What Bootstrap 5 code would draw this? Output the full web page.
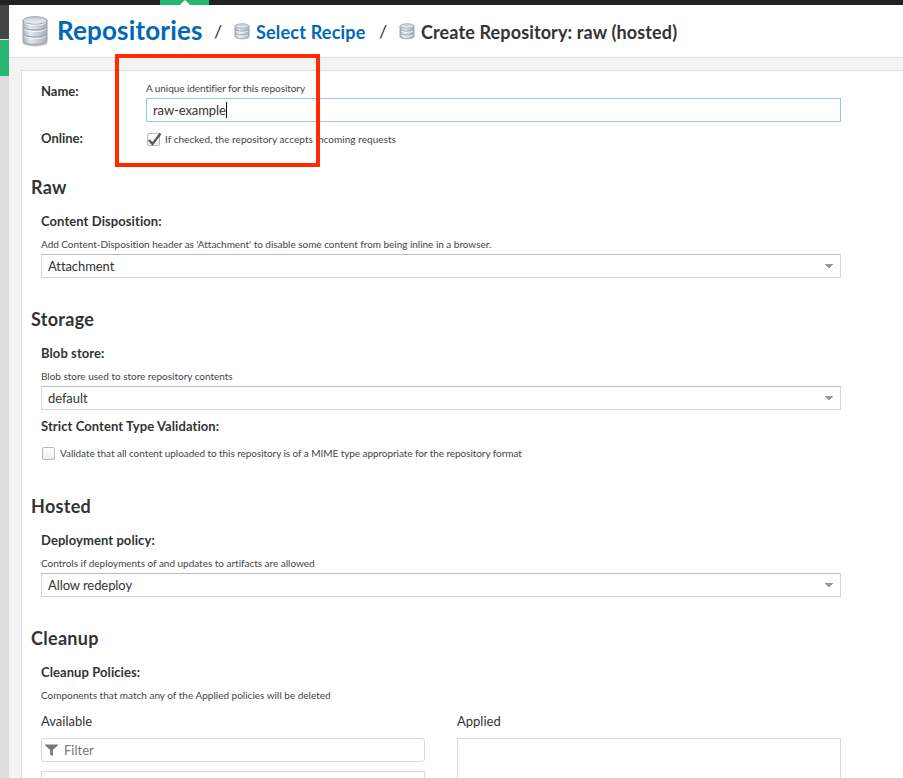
<!DOCTYPE html>
<html lang="en">
<head>
<meta charset="utf-8">
<meta name="viewport" content="width=device-width, initial-scale=1">
<title>Create Repository: raw (hosted)</title>
<link href="https://cdn.jsdelivr.net/npm/bootstrap@5.3.0/dist/css/bootstrap.min.css" rel="stylesheet">
<style>
  body { font-family: Lato, "Open Sans", sans-serif; font-size: 13px; color: #333; background: #f3f3f3; height: 778px; font-variant-ligatures: none; }
  .topbar { height: 5px; background: #222; padding-left: 160px; }
  .topbar-tab { width: 49px; height: 5px; background: #2ab573; }
  .side { width: 9px; background: #ddd; }
  .side-dark { height: 34px; background: #444; }
  .side-active { height: 36px; margin-top: 1px; background: #2ab573; }
  .crumbs { height: 53px; background: #fff; border-bottom: 1px solid #ddd; padding: 0 0 0 12px; font-size: 18px; font-weight: 700; line-height: 26px; white-space: nowrap; }
  .crumbs a { color: #0067b9; text-decoration: none; }
  .crumb-main { font-size: 26px; width: 145px; margin: -2px 0 0 8px; letter-spacing: .17px; }
  .crumb-sep { width: 32px; text-align: center; font-weight: 400; }
  .crumb-link { width: 111px; margin: 1px 0 0 6px; letter-spacing: .2px; }
  .crumb-now { margin: 1px 0 0 6px; letter-spacing: .13px; }
  .panel { margin: 12px 0 0 12px; background: #fff; border: 1px solid #ddd; border-width: 1px 0 0 1px; padding: 8px 62px 0 9px; }
  .fields { padding-left: 10px; }
  .section-title { font-size: 18px; font-weight: 700; line-height: 24px; margin: 0 0 10px; letter-spacing: .3px; }
  .field-label { display: block; font-weight: 700; line-height: 24px; margin-bottom: 2px; letter-spacing: .08px; }
  .help { font-size: 10px; line-height: 19px; color: #444; white-space: nowrap; }
  .row-label { width: 105px; font-weight: 700; line-height: 19px; }
  .row-name { padding-top: 3px; }
  .row-online { margin-top: -1px; }
  .online-row { margin: 8px 0 26px; }
  .box { height: 24px; border: 1px solid #d5d5d5; border-top-color: #bbb; padding: 0 7px 0 6px; background: #fff; }
  .box span:first-child { padding-top: 2px; letter-spacing: -.08px; }
  .box.focused { border-color: #8fc7ee; }
  .box .caret { width: 1px; height: 16px; background: #111; }
  .section { margin-bottom: 29px; }
  .section-storage { margin-bottom: 31px; }
  .check { width: 13px; height: 13px; border: 1px solid #b9b9b9; border-radius: 2px; background: linear-gradient(#fff, #eee); margin: 0 5px 0 1px; }
  .check svg { display: block; overflow: visible; }
  .filter-box { height: 24px; border: 1px solid #d9d9d9; border-radius: 3px; padding-left: 3px; color: #777; margin-top: 5px; }
  .filter-box span { margin-left: 6px; }
  .pick { width: 384px; line-height: 24px; }
  .pick-list { border: 1px solid #d9d9d9; border-bottom: 0; }
  .list-available { height: 7px; margin-top: 9px; }
  .list-applied { height: 40px; margin-top: 5px; }
  .callout { left: 115px; top: 54px; width: 205px; height: 113px; border: 4px solid #ff2a00; }
  .h-unique { letter-spacing: -.07px; }
  .h-online { letter-spacing: .04px; }
  .h-cd { letter-spacing: -.03px; }
  .h-mime { letter-spacing: -.065px; }
  .h-dep, .h-blob { letter-spacing: -.02px; }
</style>
</head>
<body class="overflow-hidden position-relative d-flex flex-column">
<svg width="0" height="0" class="position-absolute" aria-hidden="true">
  <defs>
    <linearGradient id="metal"><stop offset="0" stop-color="#a9b1bc"/><stop offset=".3" stop-color="#e3e8ee"/><stop offset=".6" stop-color="#cbd2db"/><stop offset="1" stop-color="#a3acb8"/></linearGradient>
    <linearGradient id="lid" x2="0" y2="1"><stop offset="0" stop-color="#c5ccd5"/><stop offset="1" stop-color="#f0f3f6"/></linearGradient>
    <symbol id="db" viewBox="0 0 28 32">
      <ellipse cx="14" cy="27.8" rx="12.5" ry="3.6" fill="#999" opacity=".6"/>
      <path d="M2 5v20.500c0 5 24 5 24 0V5z" fill="url(#metal)" stroke="#98a1ad"/>
      <ellipse cx="14" cy="5.500" rx="12" ry="3.800" fill="url(#lid)" stroke="#98a1ad"/>
      <path d="M2.500 12c1 4 22 4 23 0M2.500 19c1 4 22 4 23 0" fill="none" stroke="#8f99a6"/>
      <path d="M3 13.500c1 4 21 4 22 0M3 20.500c1 4 21 4 22 0M3 7.500c2 3.500 20 3.500 22 0" fill="none" stroke="#fff" opacity=".8"/>
    </symbol>
    <symbol id="db-sm" viewBox="0 0 16 17">
      <path d="M1 3v10.500c0 3 14 3 14 0V3z" fill="url(#metal)" stroke="#a0a9b5"/>
      <ellipse cx="8" cy="3" rx="7" ry="2.200" fill="url(#lid)" stroke="#a9b2bd"/>
      <path d="M1 6.500c1 2.200 13 2.200 14 0M1 10.500c1 2.200 13 2.200 14 0" fill="none" stroke="#959fad"/>
      <path d="M2 7.700c1 2 11 2 12 0M2 11.700c1 2 11 2 12 0" fill="none" stroke="#fff" opacity=".8"/>
    </symbol>
    <symbol id="down" viewBox="0 0 8 4"><path d="M0 0h8v1H7v1H6v1H5v1H3V3H2V2H1V1H0z" fill="#999"/></symbol>
  </defs>
</svg>
<div class="topbar flex-shrink-0"><div class="topbar-tab d-flex justify-content-center"><svg width="10" height="5" viewBox="0 0 10 5"><path d="M0 5 5 0l5 5z" fill="#fff"/></svg></div></div>
<div class="d-flex flex-grow-1">
  <aside class="side flex-shrink-0"><div class="side-dark"></div><div class="side-active"></div></aside>
  <main class="flex-grow-1">
    <nav class="crumbs d-flex align-items-center">
      <svg width="28" height="32"><use href="#db"/></svg>
      <a href="#" class="crumb-main">Repositories</a>
      <span class="crumb-sep">/</span>
      <svg width="16" height="17"><use href="#db-sm"/></svg>
      <a href="#" class="crumb-link">Select Recipe</a>
      <span class="crumb-sep">/</span>
      <svg width="16" height="17"><use href="#db-sm"/></svg>
      <span class="crumb-now">Create Repository: raw (hosted)</span>
    </nav>
    <form class="panel">
      <div class="fields d-flex">
        <div class="row-label row-name">Name:</div>
        <div class="flex-grow-1">
          <div class="help h-unique">A unique identifier for this repository</div>
          <div class="box focused d-flex align-items-center"><span>raw-example</span><span class="caret"></span></div>
        </div>
      </div>
      <div class="fields d-flex online-row">
        <div class="row-label row-online">Online:</div>
        <div class="help d-flex align-items-center"><span class="check"><svg width="13" height="12" viewBox="0 0 13 12"><path d="M1 6l3.500 4L12.500-.5" fill="none" stroke="#555" stroke-width="2.200"/></svg></span><span class="h-online">If checked, the repository accepts incoming requests</span></div>
      </div>
      <section class="section">
        <h2 class="section-title">Raw</h2>
        <div class="fields">
          <label class="field-label">Content Disposition:</label>
          <div class="help h-cd">Add Content-Disposition header as 'Attachment' to disable some content from being inline in a browser.</div>
          <div class="box d-flex align-items-center justify-content-between"><span>Attachment</span><svg width="8" height="4"><use href="#down"/></svg></div>
        </div>
      </section>
      <section class="section-storage">
        <h2 class="section-title">Storage</h2>
        <div class="fields">
          <label class="field-label">Blob store:</label>
          <div class="help h-blob">Blob store used to store repository contents</div>
          <div class="box d-flex align-items-center justify-content-between"><span>default</span><svg width="8" height="4"><use href="#down"/></svg></div>
          <label class="field-label mt-1 pb-1">Strict Content Type Validation:</label>
          <div class="help d-flex align-items-center"><span class="check"></span><span class="h-mime">Validate that all content uploaded to this repository is of a MIME type appropriate for the repository format</span></div>
        </div>
      </section>
      <section class="section">
        <h2 class="section-title">Hosted</h2>
        <div class="fields">
          <label class="field-label">Deployment policy:</label>
          <div class="help h-dep">Controls if deployments of and updates to artifacts are allowed</div>
          <div class="box d-flex align-items-center justify-content-between"><span>Allow redeploy</span><svg width="8" height="4"><use href="#down"/></svg></div>
        </div>
      </section>
      <section>
        <h2 class="section-title">Cleanup</h2>
        <div class="fields">
          <label class="field-label">Cleanup Policies:</label>
          <div class="help mb-1">Components that match any of the Applied policies will be deleted</div>
          <div class="d-flex justify-content-between">
            <div class="pick">
              <div>Available</div>
              <div class="filter-box d-flex align-items-center"><svg width="13" height="14" viewBox="0 0 14 14"><path d="M0 1h14v1L8.500 7v6.500L5.500 12V7L0 2z" fill="#777"/></svg><span>Filter</span></div>
              <div class="pick-list list-available"></div>
            </div>
            <div class="pick">
              <div>Applied</div>
              <div class="pick-list list-applied"></div>
            </div>
          </div>
        </div>
      </section>
    </form>
  </main>
</div>
<div class="callout position-absolute"></div>
<script src="https://cdn.jsdelivr.net/npm/bootstrap@5.3.0/dist/js/bootstrap.bundle.min.js"></script>
</body>
</html>
